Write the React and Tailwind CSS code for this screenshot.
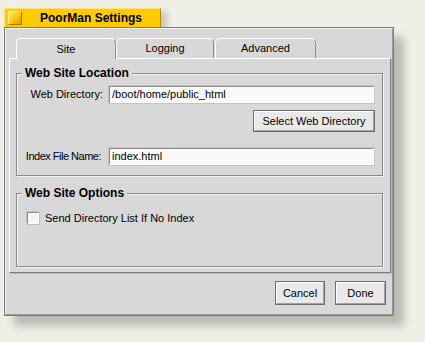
import React from "react";

const Field = ({ value }) => (
  <div className="w-[265px] h-[17px] bg-[#fafafa] border border-t-[#8a8a8a] border-l-[#8a8a8a] border-b-[#ffffff] border-r-[#ffffff] shadow-[0_0_0_1px_#c4c4c4] flex items-center pl-[2px] text-[11px] text-black">
    {value}
  </div>
);

const Button = ({ children, className = "" }) => (
  <div className={"border border-[#6e6e6e] " + className}>
    <div className="h-full flex items-center justify-center bg-[#e9e9e9] border border-t-white border-l-white border-b-[#a0a0a0] border-r-[#a0a0a0] text-[11px] text-black">
      {children}
    </div>
  </div>
);

const Tab = ({ label, active, className = "" }) => (
  <div
    className={
      "h-[20px] flex items-center justify-center rounded-t-[5px] border-t border-l border-r border-t-white border-l-white border-r-[#8c8c8c] text-[11px] text-black " +
      (active ? "bg-[#d8d8d8] relative z-10 -mb-px h-[21px] " : "bg-[#d8d8d8] ") +
      className
    }
  >
    {label}
  </div>
);

export default function App() {
  return (
    <div className="w-[425px] h-[342px] bg-[#efeee7] pl-[4px] pt-[8px] font-['Liberation_Sans',Arial,sans-serif] overflow-hidden">
      <div className="flex flex-col w-[390px]">
        <div className="w-[157px] h-[19px] bg-[#ffcb00] border-t border-l border-r border-t-[#ffe27a] border-l-[#ffe27a] border-r-[#b08a00] flex items-center shadow-[6px_4px_6px_rgba(0,0,0,0.18)]">
          <div className="ml-[3px] w-[14px] h-[14px] border border-t-[#fff3b0] border-l-[#fff3b0] border-b-[#9c7a00] border-r-[#9c7a00] bg-[linear-gradient(135deg,#fff080,#ffc400_55%,#d89a00)]" />
          <span className="ml-[18px] text-[12px] font-bold text-black">PoorMan Settings</span>
        </div>

        <div className="h-[289px] border border-[#7a7a7a] shadow-[10px_10px_8px_rgba(0,0,0,0.22)]">
          <div className="h-full border border-t-[#f6f6f6] border-l-[#f6f6f6] border-b-[#9c9c9c] border-r-[#9c9c9c] bg-[#d8d8d8] pt-[9px] pl-[3px] pr-[1px] flex flex-col">
            <div className="flex items-end ml-[7px] h-[20px]">
              <Tab label="Site" active className="w-[100px]" />
              <Tab label="Logging" className="w-[98px]" />
              <Tab label="Advanced" className="w-[101px] ml-[1px]" />
            </div>

            <div className="h-[215px] border border-t-white border-l-white border-b-[#7c7c7c] border-r-[#7c7c7c] shadow-[1px_1px_0_#b8b8b8] pl-[6px] pt-[14px]">
              <div className="relative w-[367px] h-[103px] border border-[#8a8a8a] shadow-[inset_1px_1px_0_#f4f4f4,1px_1px_0_#f4f4f4] pt-[12px]">
                <span className="absolute -top-[9px] left-[5px] px-[3px] bg-[#d8d8d8] text-[12px] leading-[16px] font-bold text-black">
                  Web Site Location
                </span>
                <div className="flex items-center">
                  <div className="w-[86px] text-right text-[11px] text-black">Web Directory:</div>
                  <div className="ml-[6px]">
                    <Field value="/boot/home/public_html" />
                  </div>
                </div>
                <div className="flex justify-end mt-[7px] pr-[7px]">
                  <Button className="w-[122px] h-[22px]">Select Web Directory</Button>
                </div>
                <div className="flex items-center mt-[16px]">
                  <div className="w-[84px] text-right text-[11px] tracking-[-0.5px] text-black">Index File Name:</div>
                  <div className="ml-[8px]">
                    <Field value="index.html" />
                  </div>
                </div>
              </div>

              <div className="relative mt-[17px] w-[367px] h-[74px] border border-[#8a8a8a] shadow-[inset_1px_1px_0_#f4f4f4,1px_1px_0_#f4f4f4] pt-[16px] pl-[10px]">
                <span className="absolute -top-[9px] left-[5px] px-[3px] bg-[#d8d8d8] text-[12px] leading-[16px] font-bold text-black">
                  Web Site Options
                </span>
                <div className="flex items-center">
                  <div className="w-[12px] h-[12px] bg-[#f6f6f6] border border-t-[#8a8a8a] border-l-[#8a8a8a] border-b-white border-r-white shadow-[0_0_0_1px_#c0c0c0]" />
                  <span className="ml-[6px] text-[11px] text-black">Send Directory List If No Index</span>
                </div>
              </div>
            </div>

            <div className="flex justify-end gap-[10px] mt-[8px] pr-[5px]">
              <Button className="w-[50px] h-[24px]">Cancel</Button>
              <Button className="w-[51px] h-[24px]">Done</Button>
            </div>
          </div>
        </div>
      </div>
    </div>
  );
}
